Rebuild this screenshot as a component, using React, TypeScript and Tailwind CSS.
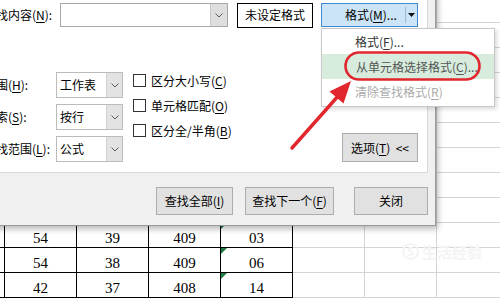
const cjk = "font-['Noto_Sans_CJK_SC','Microsoft_YaHei',sans-serif]";

function Chevron() {
  return (
    <svg width="8" height="5" viewBox="0 0 8 5">
      <path d="M0.5 0.5 L4 4 L7.5 0.5" fill="none" stroke="#5a5a5a" strokeWidth="1" />
    </svg>
  );
}

function Mn({ children }: { children: string }) {
  return <span className="underline underline-offset-2">{children}</span>;
}

function Select({ value }: { value: string }) {
  return (
    <div className="flex h-[26px] w-[67px] border border-[#bcbcbc] bg-white">
      <div className="flex flex-1 items-center pl-[3px] text-[12px] leading-none text-black">{value}</div>
      <div className="flex w-[16px] items-center justify-center border-l border-[#d2d2d2] bg-[#e3e3e3]">
        <Chevron />
      </div>
    </div>
  );
}

function Checkbox({ children }: { children: React.ReactNode }) {
  return (
    <div className="flex h-[25px] items-center gap-[5px] text-[12px] leading-none text-black">
      <div className="h-[13px] w-[13px] border border-[#333] bg-white" />
      <span>{children}</span>
    </div>
  );
}

function Button({ w, children }: { w: string; children: React.ReactNode }) {
  return (
    <div className={`flex h-[28px] items-center justify-center border border-[#adadad] bg-[#e1e1e1] text-[12px] leading-none text-black ${w}`}>
      {children}
    </div>
  );
}

// rows of the sheet behind the dialog
const rows: (string[] | null)[] = [
  null, null, null, null, null, null, null, null, null,
  ["54", "39", "409", "03"],
  ["54", "38", "409", "06"],
  ["42", "37", "408", "14"],
];

function Sheet() {
  return (
    <div className="mt-[-2px] flex flex-col font-['Liberation_Serif',serif] text-[15px] leading-none text-black">
      {rows.map((r, i) => (
        <div key={i} className="flex h-[25px]">
          <div className="w-[5px] border-r border-b border-black" />
          {[0, 1, 2, 3].map((c) => (
            <div key={c} className="relative flex w-[72px] items-center justify-center border-r border-b border-black pt-[6px]">
              {r && c === 3 && (
                <span className="absolute left-0 top-0 h-0 w-0 border-t-[6px] border-r-[6px] border-t-[#1e7b45] border-r-transparent" />
              )}
              {r ? r[c] : ""}
            </div>
          ))}
          <div className="w-[72px] border-r border-b border-[#d4d4d4]" />
          <div className="w-[72px] border-r border-b border-[#d4d4d4]" />
          <div className="flex-1 border-b border-[#d4d4d4]" />
        </div>
      ))}
    </div>
  );
}

export default function App() {
  return (
    <div className={`relative h-[300px] w-[500px] overflow-hidden bg-white ${cjk}`}>
      <Sheet />

      {/* faint watermark */}
      <div className="absolute left-[402px] top-[243px] flex items-center gap-[3px] text-[15px] font-bold leading-none text-[#f4f4f4]">
        <span className="flex h-[17px] w-[17px] items-center justify-center rounded-full border-2 border-[#f4f4f4] text-[11px]">S</span>
        <span>生活经验</span>
      </div>

      {/* Find dialog */}
      <div className="absolute left-[-30px] top-[-8px] flex h-[234px] w-[466px] flex-col border-r border-b border-[#9a9a9a] bg-[#f0f0f0] shadow-[2px_3px_6px_rgba(0,0,0,0.28)]">
        <div className="flex h-[181px] w-[458px] flex-col border-r border-b border-[#d9d9d9] bg-white pl-[14px] pr-[9px] pt-[11px]">
          {/* row 1 */}
          <div className="flex h-[24px] items-center">
            <div className="w-[76px] text-[12px] leading-none text-black">
              查找内容(<Mn>N</Mn>):
            </div>
            <div className="flex h-[24px] w-[168px] border border-[#a8a8a8] bg-white">
              <div className="flex-1" />
              <div className="flex w-[17px] items-center justify-center border-l border-[#c9c9c9] bg-[#dedede]">
                <Chevron />
              </div>
            </div>
            <div className="ml-[9px] flex h-[25px] w-[76px] items-center justify-center border border-black bg-white text-[12px] leading-none text-black">
              未设定格式
            </div>
            <div className="ml-[8px] flex h-[24px] w-[97px] border border-[#3f8ad0] bg-[#cce4f7]">
              <div className="flex flex-1 items-center pl-[23px] text-[12px] leading-none text-black">
                格式(<Mn>M</Mn>)...
              </div>
              <div className="my-[3px] w-px bg-[#9fb9d3]" />
              <div className="flex w-[11px] items-center justify-center">
                <svg width="7" height="4" viewBox="0 0 7 4">
                  <path d="M0 0 L7 0 L3.5 4 Z" fill="#111" />
                </svg>
              </div>
            </div>
          </div>

          {/* row 2 */}
          <div className="mt-[45px] flex h-[90px]">
            <div className="flex flex-col gap-[6px]">
              <div className="flex items-center">
                <div className="w-[72px] text-[12px] leading-none text-black">范围(<Mn>H</Mn>):</div>
                <Select value="工作表" />
              </div>
              <div className="flex items-center">
                <div className="w-[72px] text-[12px] leading-none text-black">搜索(<Mn>S</Mn>):</div>
                <Select value="按行" />
              </div>
              <div className="flex items-center">
                <div className="w-[72px] text-[12px] leading-none text-black">查找范围(<Mn>L</Mn>):</div>
                <Select value="公式" />
              </div>
            </div>
            <div className="ml-[10px] mt-[-4px] flex flex-col">
              <Checkbox>区分大小写(<Mn>C</Mn>)</Checkbox>
              <Checkbox>单元格匹配(<Mn>O</Mn>)</Checkbox>
              <Checkbox>区分全/半角(<Mn>B</Mn>)</Checkbox>
            </div>
            <div className="ml-auto flex h-[29px] w-[76px] items-center justify-center self-end border border-[#adadad] bg-[#e1e1e1] text-[12px] leading-none text-black">
              选项(<Mn>T</Mn>)&nbsp;&nbsp;&lt;&lt;
            </div>
          </div>
        </div>

        {/* bottom buttons */}
        <div className="mt-[14px] flex justify-end pr-[7px]">
          <Button w="w-[77px]">查找全部(<Mn>I</Mn>)</Button>
          <div className="ml-[12px]">
            <Button w="w-[89px]">查找下一个(<Mn>F</Mn>)</Button>
          </div>
          <div className="ml-[20px]">
            <Button w="w-[74px]">关闭</Button>
          </div>
        </div>
      </div>

      {/* format dropdown menu */}
      <div className="absolute left-[321px] top-[28px] flex h-[79px] w-[174px] flex-col border border-[#c8c8c8] bg-white text-[12px] leading-none shadow-[2px_2px_4px_rgba(0,0,0,0.15)]">
        <div className="flex h-[25px] items-center pl-[33px] text-[#333]">
          格式(<Mn>F</Mn>)...
        </div>
        <div className="flex h-[25px] items-center bg-[#d7ecdd] pl-[34px] text-[#555]">
          从单元格选择格式(<Mn>C</Mn>)...
        </div>
        <div className="flex h-[25px] items-center pl-[33px] text-[#aaa]">
          清除查找格式(<Mn>R</Mn>)
        </div>
      </div>

      {/* red annotation */}
      <svg className="pointer-events-none absolute left-0 top-0" width="500" height="300" viewBox="0 0 500 300">
        <rect x="345.5" y="52.5" width="134" height="27" rx="13.5" fill="none" stroke="#e1262d" strokeWidth="2.6" />
        <line x1="292" y1="148" x2="339" y2="95" stroke="#e1262d" strokeWidth="3.4" strokeLinecap="round" />
        <polygon points="351,81 329.5,91.5 343.5,103.5" fill="#e1262d" />
      </svg>
    </div>
  );
}
